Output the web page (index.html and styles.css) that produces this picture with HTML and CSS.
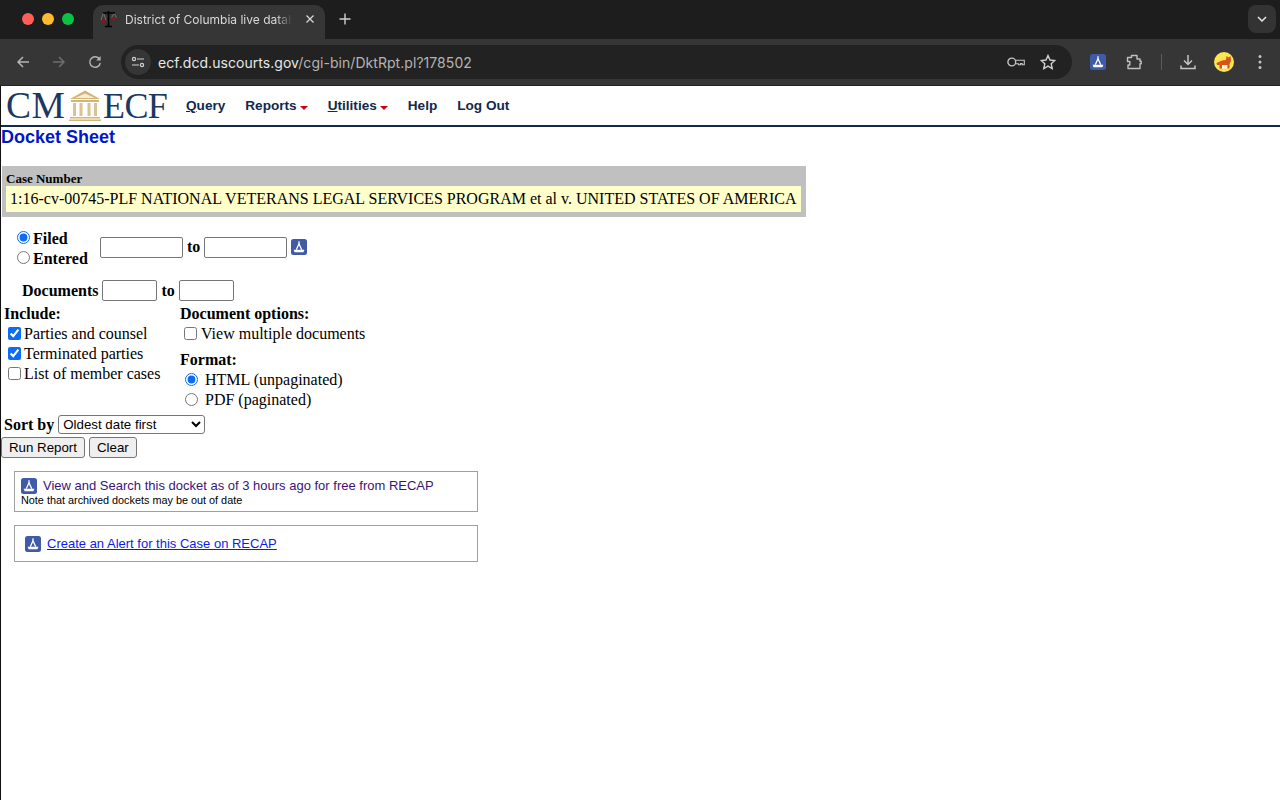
FILE: index.html
```html
<!DOCTYPE html>
<html lang="en">
<head>
<meta charset="utf-8">
<title>District of Columbia live database</title>
<link rel="stylesheet" href="styles.css">
</head>
<body>
<svg class="defs" width="0" height="0" aria-hidden="true">
  <symbol id="recap" viewBox="0 0 16 16">
    <rect width="16" height="16" rx="2.500" fill="#3f5aa6"/>
    <path d="M8 2.300v2.500M8 4.800 5.300 10.800M8 4.800l2.700 6" stroke="#fff" stroke-width="1.300" fill="none"/>
    <path d="M2.600 10.800h10.800l-1 2.400H3.600z" fill="#fff"/>
  </symbol>
</svg>
<header class="browser">
  <div class="tabstrip">
    <div class="lights"><i class="light red"></i><i class="light amber"></i><i class="light green"></i></div>
    <div class="tab">
      <svg class="favicon" viewBox="0 0 18 18" width="18" height="18">
        <path d="M3.500 3 1 10M3.500 3 6 10M14 3l-2.500 5M14 3l2.500 5" stroke="#999" stroke-width=".6" fill="none"/>
        <path d="M.8 10h5.400c0 4-5.400 4-5.400 0zM11.200 7.500h5.400c0 4-5.400 4-5.400 0z" fill="#8a1422"/>
        <path d="M8.500 1v15M5 16.500h7M3 3h12" stroke="#000" stroke-width="1.700" fill="none"/>
      </svg>
      <span class="tab-title">District of Columbia live datab</span>
      <svg class="tab-close" viewBox="0 0 10 10" width="10" height="10"><path d="M1.500 1.500l7 7M8.500 1.500l-7 7" stroke="#d8d8d8" stroke-width="1.300"/></svg>
    </div>
    <svg class="new-tab" viewBox="0 0 12 12" width="12" height="12"><path d="M6 .5v11M.5 6h11" stroke="#d0d0d0" stroke-width="1.400"/></svg>
    <div class="tab-search"><svg viewBox="0 0 10 6" width="10" height="6"><path d="M1 1l4 4 4-4" stroke="#e6e6e6" stroke-width="1.500" fill="none"/></svg></div>
  </div>
  <div class="toolbar">
    <svg class="nav-btn" viewBox="0 0 14 14" width="14" height="14"><path d="M13 7H2M7 2 2 7l5 5" stroke="#b4b4b4" stroke-width="1.500" fill="none"/></svg>
    <svg class="nav-btn" viewBox="0 0 14 14" width="14" height="14"><path d="M1 7h11M7 2l5 5-5 5" stroke="#6d6d6d" stroke-width="1.500" fill="none"/></svg>
    <svg class="nav-btn" viewBox="0 0 14 14" width="14" height="14"><path d="M11.600 4.200A5.300 5.300 0 1 0 12.300 8" stroke="#b4b4b4" stroke-width="1.400" fill="none"/><path d="M12.600 1v4.400H8.200z" fill="#b4b4b4"/></svg>
    <div class="omnibox">
      <div class="site-info"><svg viewBox="0 0 14 12" width="14" height="12"><g stroke="#d0d0d0" stroke-width="1.200" fill="none"><circle cx="3" cy="3" r="1.600"/><path d="M6 3h7M1 9h7"/><circle cx="11" cy="9" r="1.600"/></g></svg></div>
      <span class="url"><span class="host">ecf.dcd.uscourts.gov</span>/cgi-bin/DktRpt.pl?178502</span>
      <svg class="key" viewBox="0 0 18 12" width="18" height="12"><circle cx="4.800" cy="6" r="3.900" stroke="#c4c4c4" stroke-width="1.400" fill="none"/><path d="M8.700 4.200h8.600v4.600h-2.200V7.600h-1.600v1.200h-2V7.800H8.700" stroke="#c4c4c4" stroke-width="1.100" fill="none"/></svg>
      <svg class="star" viewBox="0 0 16 16" width="16" height="16"><path d="M8 1.500l2 4.500 4.800.5-3.600 3.200 1 4.800L8 12.100l-4.200 2.400 1-4.800L1.200 6.500 6 6z" stroke="#d0d0d0" stroke-width="1.400" fill="none"/></svg>
    </div>
    <svg class="ext-recap" width="16" height="16"><use href="#recap"/></svg>
    <svg class="ext-puzzle" viewBox="0 0 16 16" width="16" height="16"><path d="M1.500 3.500H5.500V1.500H11V5h3v2.200h1.200v2.600H14V14.500H2V11H3.800V7.500H1.500z" stroke="#c0c0c0" stroke-width="1.400" fill="none" stroke-linejoin="round"/></svg>
    <i class="divider"></i>
    <svg class="download" viewBox="0 0 16 16" width="16" height="16"><path d="M8 1v9M4 6.500 8 10.500l4-4M1 11.500v3h14v-3" stroke="#c4c4c4" stroke-width="1.500" fill="none"/></svg>
    <svg class="avatar" viewBox="0 0 20 20" width="20" height="20"><circle cx="10" cy="10" r="10" fill="#fbe64f"/><path d="M2.500 11 8 8.500l4-.5 .5-4 2 1.500 2-1.500 .5 5-1.500 3v4.500h-2V13H8v3.500H5.500V13H3z" fill="#d9521e"/><path d="M8 13h5v3.500H8z" fill="#fff3dc"/></svg>
    <svg class="menu" viewBox="0 0 4 16" width="4" height="16"><circle cx="2" cy="2.500" r="1.500" fill="#c4c4c4"/><circle cx="2" cy="8" r="1.500" fill="#c4c4c4"/><circle cx="2" cy="13.500" r="1.500" fill="#c4c4c4"/></svg>
  </div>
</header>

<main class="page">
  <nav class="topmenu">
    <div class="logo">
      <span class="logo-cm">CM</span>
      <svg viewBox="0 0 32 31" width="32" height="31">
        <path d="M16 .5 31 9H1z" fill="#d3b576"/><path d="M16 3.500 26 8H6z" fill="#f6ecd4"/>
        <path d="M2 10h28v2H2zM1 27h30v1.500H1zM0 29.500h32V31H0z" fill="#d3b576"/>
        <path d="M4 13h3v13H4zM10.500 13h3v13h-3zM18.500 13h3v13h-3zM25 13h3v13h-3z" fill="#dcc290"/>
      </svg>
      <span class="logo-ecf">ECF</span>
    </div>
    <ul class="menu-items">
      <li><u>Q</u>uery</li>
      <li>Reports<i class="caret"></i></li>
      <li><u>U</u>tilities<i class="caret"></i></li>
      <li>Help</li>
      <li>Log Out</li>
    </ul>
  </nav>
  <h3 class="title">Docket Sheet</h3>
  <div class="case-box">
    <b class="case-label">Case Number</b>
    <div class="case-value">1:16-cv-00745-PLF NATIONAL VETERANS LEGAL SERVICES PROGRAM et al v. UNITED STATES OF AMERICA</div>
  </div>
  <form class="report">
    <div class="date-row">
      <div class="date-type">
        <label><input type="radio" name="dt" checked><b>Filed</b></label>
        <label><input type="radio" name="dt"><b>Entered</b></label>
      </div>
      <div class="date-inputs">
        <input type="text" class="date"><b class="to">to</b><input type="text" class="date">
        <svg class="recap-inline" width="16" height="16"><use href="#recap"/></svg>
      </div>
    </div>
    <div class="docs-row">
      <b>Documents</b><input type="text" class="doc"><b class="to">to</b><input type="text" class="doc">
    </div>
    <div class="options">
      <div class="col-include">
        <b class="line">Include:</b>
        <label class="line"><input type="checkbox" checked>Parties and counsel</label>
        <label class="line"><input type="checkbox" checked>Terminated parties</label>
        <label class="line"><input type="checkbox">List of member cases</label>
      </div>
      <div class="col-doc">
        <b class="line">Document options:</b>
        <label class="line indent"><input type="checkbox">View multiple documents</label>
        <b class="line format">Format:</b>
        <label class="line indent"><input type="radio" name="fmt" checked>HTML (unpaginated)</label>
        <label class="line indent"><input type="radio" name="fmt">PDF (paginated)</label>
      </div>
    </div>
    <div class="sort-row">
      <b>Sort by</b>
      <select><option>Oldest date first</option><option>Most recent date first</option></select>
    </div>
    <div class="buttons"><button type="button">Run Report</button><button type="button">Clear</button></div>
  </form>
  <section class="recap-box first">
    <div class="recap-link"><svg width="16" height="16"><use href="#recap"/></svg><a class="visited" href="#a">View and Search this docket as of 3 hours ago for free from RECAP</a></div>
    <div class="recap-note">Note that archived dockets may be out of date</div>
  </section>
  <section class="recap-box second">
    <div class="recap-link"><svg width="16" height="16"><use href="#recap"/></svg><a class="alert" href="#b">Create an Alert for this Case on RECAP</a></div>
  </section>
</main>
</body>
</html>
```
FILE: styles.css
```css
* { box-sizing: border-box; }
html, body { margin: 0; height: 100%; background: #fff; overflow: hidden; }
body { display: flex; flex-direction: column; font-family: "Liberation Serif", serif; font-size: 16px; color: #000; }
.defs { position: absolute; }

.browser { flex: none; font-family: Inter, "Liberation Sans", sans-serif; }
.tabstrip { height: 39px; background: #1d1d1d; display: flex; align-items: flex-end; position: relative; }
.lights { display: flex; gap: 8px; margin: 0 0 14px 22px; width: 71px; flex: none; }
.light { width: 12px; height: 12px; border-radius: 50%; }
.red { background: #ff5f57; }
.amber { background: #febc2e; }
.green { background: #0cc244; }
.tab { width: 232px; height: 34px; background: #363636; border-radius: 10px 10px 0 0; display: flex; align-items: center; padding: 0 10px 6px 7px; color: #d8d8d8; font-size: 12px; }
.favicon { flex: none; margin-right: 7px; }
.tab-title { flex: 1; white-space: nowrap; -webkit-mask-image: linear-gradient(to right, #000 88%, transparent 97%); mask-image: linear-gradient(to right, #000 88%, transparent 97%); }
.tab-close { flex: none; margin-left: 8px; }
.new-tab { margin: 0 0 14px 14px; }
.tab-search { position: absolute; right: 4px; top: 5px; width: 28px; height: 28px; border-radius: 8px; background: #333; display: flex; align-items: center; justify-content: center; }

.toolbar { height: 47px; background: #363636; display: flex; align-items: center; padding: 0 0 0 16px; border-bottom: 1px solid #222; }
.nav-btn { flex: none; margin-right: 22px; }
.nav-btn:nth-child(3) { margin-right: 19px; }
.omnibox { width: 951px; height: 34px; border-radius: 17px; background: #222; display: flex; align-items: center; padding: 0 16px 0 4px; color: #b4b4b4; font-size: 14px; }
.site-info { width: 26px; height: 26px; border-radius: 50%; background: #363636; display: flex; align-items: center; justify-content: center; margin-right: 7px; flex: none; }
.url { flex: 1; white-space: nowrap; letter-spacing: .05px; }
.host { color: #e8e8e8; }
.key { margin-right: 15px; }
.ext-recap { margin-left: 18px; flex: none; }
.ext-puzzle { margin-left: 20px; flex: none; }
.divider { width: 1px; height: 16px; background: #5c5c5c; margin: 0 18px 0 19px; flex: none; }
.avatar { margin-left: 18px; flex: none; }
.menu { margin-left: 24px; flex: none; }

.page { flex: 1; border-left: 1px solid #111; position: relative; }
.topmenu { height: 41px; border-bottom: 2px solid #12284c; display: flex; align-items: center; }
.logo { display: flex; align-items: flex-end; color: #1b3863; font-size: 36px; line-height: 34px; width: 185px; padding-left: 5px; flex: none; }
.logo-cm { font-size: 37.500px; letter-spacing: .4px; width: 63px; white-space: nowrap; }
.logo-ecf { letter-spacing: -.6px; }
.logo svg { margin: 0 2px 2px 0; flex: none; }
.menu-items { list-style: none; margin: 0; padding: 0; display: flex; gap: 20px; font: bold 13.6px "Liberation Sans", sans-serif; color: #12284c; }
.menu-items li { display: flex; align-items: center; }
.caret { width: 0; height: 0; border: 4px solid transparent; border-top-color: #c8000f; border-bottom: 0; margin: 5px 0 0 3px; }
.title { margin: 0; font: bold 18px/21px "Liberation Sans", sans-serif; color: #0018c8; }
.case-box { width: 804px; height: 51px; margin: 18px 0 0 1px; background: #c0c0c0; padding: 6px 4px 0 4px; }
.case-label { display: block; font-size: 13px; line-height: 14px; }
.case-value { width: 795px; height: 26px; margin-left: 0; background: #ffffcc; line-height: 26px; padding-left: 4px; white-space: nowrap; }

.report { padding-left: 3px; }
.report input[type=radio], .report input[type=checkbox] { accent-color: #0b6cf5; margin: 0; flex: none; }
.report input[type=text] { height: 21px; border: 1px solid #767676; border-radius: 2px; padding: 0; margin: 0; background: #fff; }
.date-row { display: flex; align-items: center; margin-top: 12px; padding-left: 13px; height: 40px; }
.date-type { width: 83px; display: flex; flex-direction: column; }
.date-type label { display: flex; align-items: center; gap: 3px; height: 20px; }
.date-type input { position: relative; top: -2px; }
.date-inputs { display: flex; align-items: center; margin-top: -4px; }
.date { width: 83px; }
.to { margin: 0 4px; }
.recap-inline { margin-left: 4px; flex: none; }
.docs-row { display: flex; align-items: center; height: 21px; margin-top: 11px; padding-left: 18px; }
.docs-row b:first-child { margin-right: 4px; }
.doc { width: 55px; }
.options { display: flex; margin-top: 3px; }
.col-include { width: 176px; }
.line { display: flex; align-items: center; height: 20px; }
.col-include label { gap: 3px; padding-left: 4px; }
.col-doc .indent { padding-left: 4px; gap: 4px; }
.col-doc .format { margin-top: 6px; }
.col-doc .indent input { position: relative; top: -1px; }
.col-include label input { position: relative; top: -1px; }
.col-doc .indent input[type=radio] { margin: 0 3px 0 1px; }
.sort-row { display: flex; align-items: center; gap: 4px; height: 20px; margin-top: 5px; }
.sort-row select { width: 147px; height: 19px; font: 13.300px "Liberation Sans", sans-serif; background: #fff; border: 1px solid #767676; border-radius: 3px; padding: 0; margin-top: -1px; }
.buttons { display: flex; gap: 4px; margin-top: 2px; margin-left: -3px; }
.buttons button { height: 21px; padding: 0 7px; font: 13.300px "Liberation Sans", sans-serif; background: #efefef; border: 1px solid #767676; border-radius: 3px; color: #000; }

.recap-box { width: 464px; margin-left: 13px; border: 1px solid #a0a0a0; font-family: "Liberation Sans", sans-serif; }
.recap-box.first { height: 41px; margin-top: 13px; padding: 6px 6px 0; }
.recap-box.second { height: 37px; margin-top: 13px; padding: 10px 10px 0; }
.recap-link { display: flex; align-items: center; gap: 6px; font-size: 13px; line-height: 16px; }
.recap-link svg { flex: none; }
.visited { color: #3c1478; text-decoration: none; }
.alert { color: #0a1ee6; }
.recap-note { font-size: 10.850px; line-height: 12px; }
```
